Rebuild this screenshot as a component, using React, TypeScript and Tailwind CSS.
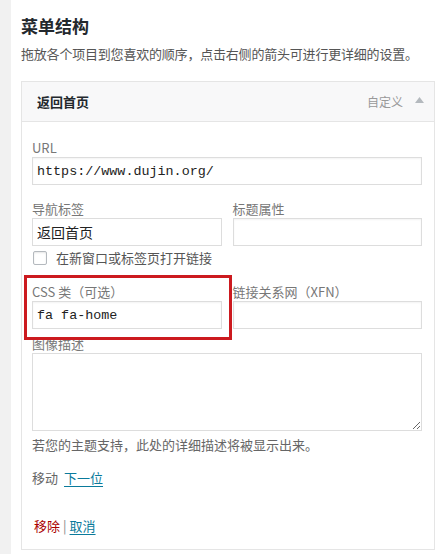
import React from 'react';

const cjk = "font-['Noto_Sans_CJK_SC',sans-serif]";
const mono = "font-['Liberation_Mono','Noto_Sans_CJK_SC',monospace]";

function Field({ label, value, className = '' }: { label: string; value?: string; className?: string }) {
  return (
    <div className={`flex flex-col ${className}`}>
      <label className="text-[13px] leading-[18px] text-[#777]">{label}</label>
      <input
        readOnly
        value={value ?? ''}
        className={`h-[28px] w-full border border-[#dddddd] bg-white px-[4px] text-[13.4px] text-[#222] outline-none shadow-[inset_0_1px_2px_rgba(0,0,0,0.05)] ${mono}`}
      />
    </div>
  );
}

export default function App() {
  return (
    <div className={`relative flex min-h-[554px] w-[447px] bg-white ${cjk}`}>
      <div className="w-[11px] shrink-0 bg-[#f1f1f1]" />

      <div className="flex-1 pl-[10px] pr-[12px]">
        <h2 className="pt-[14px] text-[17px] font-bold leading-[24px] text-[#23282d]">菜单结构</h2>
        <p className="mt-[6px] text-[13px] leading-[20px] tracking-[-0.2px] text-[#555]">
          拖放各个项目到您喜欢的顺序，点击右侧的箭头可进行更详细的设置。
        </p>

        <div className="mt-[17px] border border-[#e5e5e5] bg-white">
          {/* item header */}
          <div className="flex h-[40px] items-center border-b border-[#e5e5e5] bg-[#f8f8f9] pl-[15px] pr-[10px]">
            <span className="text-[13px] font-bold text-[#23282d]">返回首页</span>
            <span className="ml-auto text-[12px] text-[#999]">自定义</span>
            <svg className="ml-[12px] mb-[3px]" width="9" height="6" viewBox="0 0 9 6">
              <path d="M0 6 L4.5 0 L9 6 Z" fill="#b4b9be" />
            </svg>
          </div>

          {/* item settings */}
          <div className="pl-[10px] pr-[12px] pt-[17px] pb-[14px]">
            <Field label="URL" value="https://www.dujin.org/" />

            <div className="mt-[15px] grid grid-cols-2 gap-x-[11px]">
              <div className="flex flex-col">
                <label className="text-[13px] leading-[18px] text-[#777]">导航标签</label>
                <input
                  readOnly
                  value="返回首页"
                  className="h-[28px] w-full border border-[#dddddd] bg-white px-[4px] text-[14px] text-[#222] outline-none"
                />
              </div>
              <Field label="标题属性" />
            </div>

            <label className="mt-[5px] flex h-[14px] items-center gap-[9px]">
              <span className="ml-[1px] h-[14px] w-[14px] rounded-[2px] border border-[#b4b9be] bg-white shadow-[inset_0_1px_2px_rgba(0,0,0,0.1)]" />
              <span className="text-[13px] leading-[18px] text-[#555]">在新窗口或标签页打开链接</span>
            </label>

            <div className="mt-[18px] grid grid-cols-2 gap-x-[11px]">
              <Field label="CSS 类（可选）" value="fa fa-home" />
              <Field label="链接关系网（XFN）" />
            </div>

            <div className="mt-[6px] flex flex-col">
              <label className="text-[13px] leading-[18px] text-[#777]">图像描述</label>
              <textarea
                readOnly
                className="h-[78px] w-full border border-[#dddddd] bg-white outline-none"
              />
            </div>

            <p className="mt-[5px] text-[13px] leading-[18px] text-[#666]">
              若您的主题支持，此处的详细描述将被显示出来。
            </p>

            <div className="mt-[15px] flex items-center gap-[6px] text-[13px] leading-[18px]">
              <span className="text-[#666]">移动</span>
              <a className="text-[#0a7a9b] underline underline-offset-[3px]">下一位</a>
            </div>

            <div className="mt-[30px] flex items-center gap-[3px] pl-[2px] text-[13px] leading-[18px]">
              <a className="text-[#a00]">移除</a>
              <span className="text-[#888]">|</span>
              <a className="text-[#0a7a9b] underline underline-offset-[3px]">取消</a>
            </div>
          </div>
        </div>
      </div>

      {/* red highlight annotation */}
      <div className="pointer-events-none absolute left-[24px] top-[275px] h-[65px] w-[208px] border-[3px] border-[#cc1a1f]" />
    </div>
  );
}
